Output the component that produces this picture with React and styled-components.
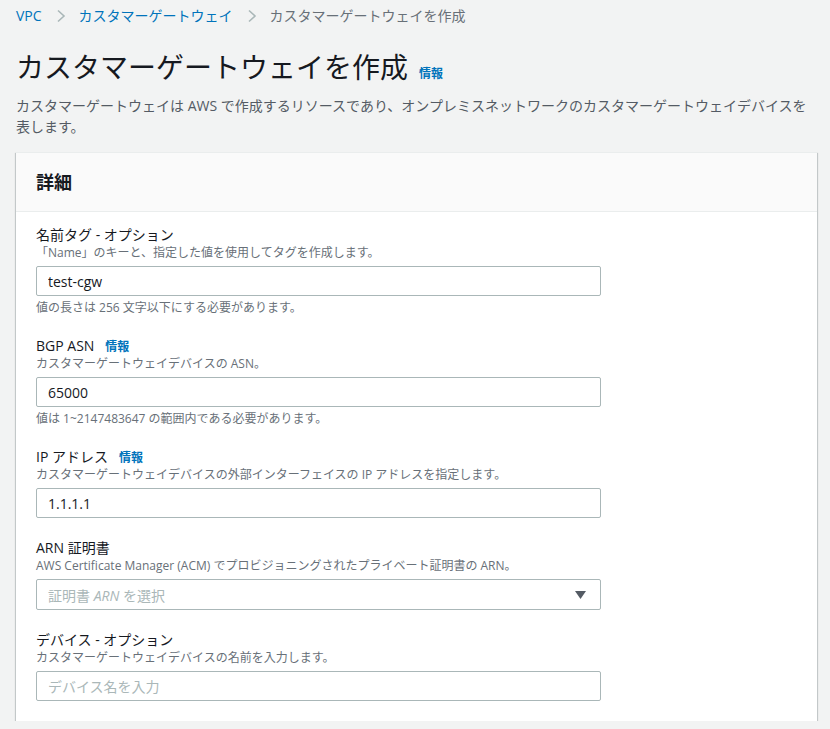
import React from "react";
import styled, { createGlobalStyle } from "styled-components";

const Global = createGlobalStyle`
  html, body { margin: 0; padding: 0; background: #f2f3f3; }
  body {
    font-family: "Open Sans", "Noto Sans CJK JP", sans-serif;
    color: #16191f;
  }
  * { box-sizing: border-box; }
`;

const Page = styled.div`
  padding: 0 13px 0 16px;
`;

const Breadcrumbs = styled.nav`
  display: flex;
  align-items: center;
  height: 32px;
  font-size: 14px;
  line-height: 20px;
`;

const Crumb = styled.span`
  color: ${(p) => (p.$current ? "#687078" : "#0073bb")};
`;

const Chevron = styled.svg`
  width: 10px;
  height: 14px;
  margin: 0 13px 0 14px;
  flex: none;
`;

const TitleRow = styled.div`
  display: flex;
  align-items: baseline;
  margin-top: 18px;
`;

const Title = styled.h1`
  margin: 0;
  font-size: 28px;
  line-height: 34px;
  font-weight: 400;
  color: #16191f;
`;

const Info = styled.a`
  font-size: 12px;
  line-height: 1;
  font-weight: 700;
  color: #0073bb;
  margin-left: ${(p) => p.$gap || 10}px;
  text-decoration: none;
`;

const Desc = styled.p`
  margin: 11px 0 0;
  font-size: 14px;
  line-height: 21px;
  color: #545b64;
`;

const Card = styled.section`
  margin-top: 15px;
  width: 801px;
  background: #fff;
  border-top: 1px solid #eaeded;
  box-shadow: 0 1px 1px 0 rgba(0, 28, 36, 0.3), 1px 1px 1px 0 rgba(0, 28, 36, 0.15),
    -1px 1px 1px 0 rgba(0, 28, 36, 0.15);
`;

const CardHeader = styled.header`
  background: #fafafa;
  border-bottom: 1px solid #eaeded;
  padding: 18px 20px 18px;
`;

const CardTitle = styled.h2`
  margin: 0;
  font-size: 18px;
  line-height: 22px;
  font-weight: 700;
  color: #16191f;
`;

const CardBody = styled.div`
  padding: 13px 20px 20px;
  display: flex;
  flex-direction: column;
  gap: 20px;
`;

const Field = styled.div`
  display: flex;
  flex-direction: column;
`;

const Label = styled.label`
  display: block;
  height: 20px;
  font-size: 14px;
  line-height: 20px;
  color: #16191f;
`;

const Hint = styled.div`
  font-size: 12px;
  line-height: 16px;
  color: #687078;
`;

const Constraint = styled(Hint)`
  margin-top: 4px;
`;

const Input = styled.input`
  margin-top: 5px;
  width: 565px;
  height: 30px;
  border: 1px solid #aab7b8;
  border-radius: 2px;
  padding: 0 11px;
  font-family: "Open Sans", "Noto Sans CJK JP", sans-serif;
  font-size: 14px;
  color: #16191f;
  background: #fff;
  outline: none;
  &::placeholder {
    color: #aab7b8;
  }
`;

const Select = styled.div`
  margin-top: 5px;
  width: 565px;
  height: 31px;
  border: 1px solid #aab7b8;
  border-radius: 2px;
  padding: 0 14px 0 11px;
  display: flex;
  align-items: center;
  justify-content: space-between;
  font-size: 14px;
  color: #aab7b8;
  background: #fff;
`;

const Em = styled.em`
  font-style: italic;
`;

const Caret = styled.svg`
  width: 11px;
  height: 8px;
`;

const ChevronIcon = () => (
  <Chevron viewBox="0 0 10 14">
    <path d="M2 1.5 L8 7 L2 12.5" fill="none" stroke="#aab7b8" strokeWidth="1.6" />
  </Chevron>
);

export default function App() {
  return (
    <>
      <Global />
      <Page>
        <Breadcrumbs>
          <Crumb>VPC</Crumb>
          <ChevronIcon />
          <Crumb>カスタマーゲートウェイ</Crumb>
          <ChevronIcon />
          <Crumb $current>カスタマーゲートウェイを作成</Crumb>
        </Breadcrumbs>
        <TitleRow>
          <Title>カスタマーゲートウェイを作成</Title>
          <Info $gap={11}>情報</Info>
        </TitleRow>
        <Desc>
          カスタマーゲートウェイは AWS で作成するリソースであり、オンプレミスネットワークのカスタマーゲートウェイデバイスを表します。
        </Desc>
        <Card>
          <CardHeader>
            <CardTitle>詳細</CardTitle>
          </CardHeader>
          <CardBody>
            <Field>
              <Label>名前タグ - オプション</Label>
              <Hint>「Name」のキーと、指定した値を使用してタグを作成します。</Hint>
              <Input defaultValue="test-cgw" />
              <Constraint>値の長さは 256 文字以下にする必要があります。</Constraint>
            </Field>
            <Field>
              <Label>
                BGP ASN<Info $gap={11}>情報</Info>
              </Label>
              <Hint>カスタマーゲートウェイデバイスの ASN。</Hint>
              <Input defaultValue="65000" />
              <Constraint>値は 1~2147483647 の範囲内である必要があります。</Constraint>
            </Field>
            <Field>
              <Label>
                IP アドレス<Info $gap={11}>情報</Info>
              </Label>
              <Hint>カスタマーゲートウェイデバイスの外部インターフェイスの IP アドレスを指定します。</Hint>
              <Input defaultValue="1.1.1.1" />
            </Field>
            <Field>
              <Label>ARN 証明書</Label>
              <Hint>AWS Certificate Manager (ACM) でプロビジョニングされたプライベート証明書の ARN。</Hint>
              <Select>
                <span>
                  証明書 <Em>ARN</Em> を選択
                </span>
                <Caret viewBox="0 0 11 8">
                  <path d="M0 0 H11 L5.5 8 Z" fill="#545b64" />
                </Caret>
              </Select>
            </Field>
            <Field>
              <Label>デバイス - オプション</Label>
              <Hint>カスタマーゲートウェイデバイスの名前を入力します。</Hint>
              <Input placeholder="デバイス名を入力" />
            </Field>
          </CardBody>
        </Card>
      </Page>
    </>
  );
}
